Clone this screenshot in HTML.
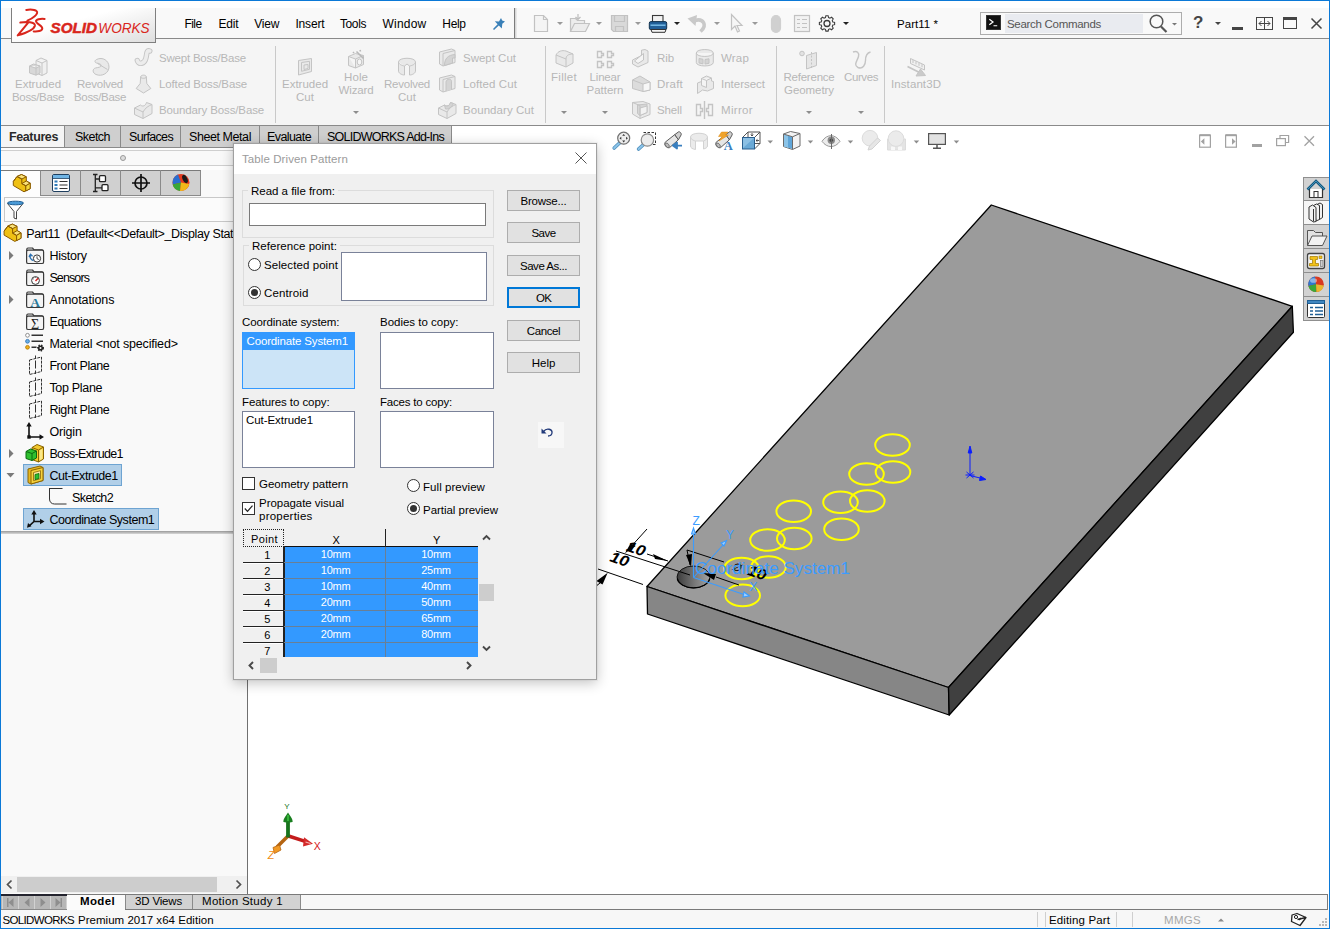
<!DOCTYPE html>
<html lang="en">
<head>
<meta charset="utf-8">
<title>SOLIDWORKS Premium 2017 x64 Edition - Part11</title>
<style>
html,body{margin:0;padding:0}
body{width:1330px;height:929px;position:relative;overflow:hidden;background:#fff;font-family:"Liberation Sans",sans-serif;font-size:11.5px;color:#000;line-height:14px}
*{box-sizing:border-box}
.a{position:absolute}
.t{position:absolute;white-space:nowrap}
svg{position:absolute;overflow:visible}
/* window frame */
#frame{left:0;top:0;width:1330px;height:929px;border:1px solid #0b79d7;z-index:100;pointer-events:none}
/* menubar */
#menubar{left:1px;top:8px;width:1328px;height:30px;background:#f9f9f9}
#menuline{left:1px;top:38px;width:1328px;height:1px;background:#8a8a8a}
#logo{left:11px;top:8px;width:145px;height:35px;border:1px solid #7f7f7f;border-top:none;background:linear-gradient(165deg,#ffffff 40%,#dedede 100%)}
.menu{top:17px;font-size:12.5px}
/* command manager */
#cm{left:1px;top:39px;width:1328px;height:86px;background:#f5f5f5}
.dis{color:#b9b9b9}
.cmt{font-size:12.5px;color:#b7b7b7}
.vsep{width:1px;background:#c9c9c9}
/* tabs */
#tabline{left:1px;top:147px;width:451px;height:1px;background:#8a8a8a}
.tab{top:125px;height:22px;background:#cfcfcf;border:1px solid #8a8a8a;border-bottom:none;font-size:12.5px;padding-top:4px;text-align:center}
.btn{left:507px;width:73px;height:21px;background:#e1e1e1;border:1px solid #adadad}
#logo{z-index:5}

</style>
</head>
<body>
<div id="menubar" class="a"></div>
<div id="menuline" class="a"></div>
<div id="logo" class="a">
<svg width="143" height="34" viewBox="0 0 143 34" style="left:0;top:0">
 <g fill="none" stroke="#d9261c" stroke-width="2" stroke-linecap="round" stroke-linejoin="round">
  <path d="M14.300 1.900 C20 1 26 2 25.100 5 C24.300 8 19 11 15.400 12.600"/>
  <path d="M8.300 14.600 C14 13.600 23.600 13.500 22.900 17.700 C22 22 12 25.500 5.700 27.400 L16 14.900"/>
  <path d="M32.600 10.900 C28 10.400 24 11.500 24 13.100 C24 16 30.500 17.500 30.300 20.600 C30 23 25.500 23.800 21.700 23.400"/>
 </g>
 <text x="38.500" y="24.600" font-family="Liberation Sans,sans-serif" font-size="14.500" font-style="italic" font-weight="bold" fill="#d9261c" stroke="#d9261c" stroke-width=".5" textLength="46.400" lengthAdjust="spacingAndGlyphs">SOLID</text>
 <text x="86.300" y="24.600" font-family="Liberation Sans,sans-serif" font-size="14.500" font-style="italic" fill="#d9261c" textLength="51.400" lengthAdjust="spacingAndGlyphs">WORKS</text>
</svg>
</div>
<div class="t" style="left:184.4px;top:17.0px;letter-spacing:-0.51px;font-size:12px">File</div>
<div class="t" style="left:218.5px;top:17.0px;letter-spacing:-0.22px;font-size:12px">Edit</div>
<div class="t" style="left:254.2px;top:17.0px;letter-spacing:-0.15px;font-size:12px">View</div>
<div class="t" style="left:295.4px;top:17.0px;letter-spacing:-0.17px;font-size:12px">Insert</div>
<div class="t" style="left:340.0px;top:17.0px;letter-spacing:-0.40px;font-size:12px">Tools</div>
<div class="t" style="left:382.5px;top:17.0px;letter-spacing:0.22px;font-size:12px">Window</div>
<div class="t" style="left:442.3px;top:17.0px;letter-spacing:-0.32px;font-size:12px">Help</div>
<!-- pin -->
<svg width="14" height="14" viewBox="0 0 14 14" style="left:492px;top:17px"><path d="M9 1 L10.200 3.600 L13 4.600 L10.300 6.800 L9.800 11.500 L6.800 8.400 L2 13 L1 12 L5.600 7.200 L2.800 4.200 L7 4.400 Z" fill="#3a80b8"/></svg>
<div class="a" style="left:514px;top:8px;width:3px;height:30px;background:linear-gradient(90deg,#7c7c7c 0,#7c7c7c 34%,#d0d0d0 34%,#f0f0f0 100%)"></div>
<!-- quick access toolbar -->
<svg width="340" height="30" viewBox="0 0 340 30" style="left:520px;top:8px">
 <g fill="none" stroke="#c2c2c2" stroke-width="1.2">
  <!-- new -->
  <path d="M14.5 7.5 h9 l4 4 v12 h-13 z M23.5 7.5 v4 h4" fill="#f4f4f4"/>
  <!-- open -->
  <path d="M50.500 23.500 v-13 h5 l2 2 h7 v3 M50.500 23.500 l4-8 h15 l-4 8 z" fill="#ececec"/>
  <path d="M58 6 v5 M55.500 9 l2.500 2.500 l2.500-2.500" stroke="#bdbdbd"/>
  <!-- save -->
  <path d="M91.500 7.500 h16 v16 h-14 l-2-2 z" fill="#d9d9d9"/>
  <path d="M94.500 7.500 v6 h10 v-6 M95.500 23.500 v-5 h8 v5" />
  <!-- undo -->
  <path d="M175 12.500 C183 10 188 17 180.500 23.500" stroke-width="3.600" stroke="#c9c9c9"/>
  <path d="M167.500 10.500 l9.500-3.500 l-1.500 11 z" fill="#c9c9c9" stroke="none"/>
  <!-- select arrow -->
  <path d="M211.500 6.500 v15 l3.500-3.500 l2.500 6 l2-1 l-2.500-5.500 h5 z" fill="#f6f6f6"/>
  <!-- stoplight -->
  <rect x="251.500" y="7.500" width="9" height="17" rx="4.500" fill="#d0d0d0" stroke="#d0d0d0"/>
  <!-- options list -->
  <rect x="274.500" y="7.500" width="15" height="16" fill="#f2f2f2"/>
  <path d="M277 11.500 h3 M282 11.500 h5 M277 15.500 h3 M282 15.500 h5 M277 19.500 h3 M282 19.500 h5"/>
 </g>
 <!-- print -->
 <g>
  <rect x="132.500" y="7.500" width="10.500" height="8" fill="#f2f2f2" stroke="#3a3a3a" stroke-width="1.100"/>
  <rect x="129.300" y="13.600" width="17.400" height="8" rx="1.500" fill="#215f98" stroke="#12324f" stroke-width="1"/>
  <path d="M130.500 17.200 h15" stroke="#7cc0ea" stroke-width="1.400"/>
  <path d="M131 21.500 h15 l-1 2.800 h-13 z" fill="#f4f4f4" stroke="#333" stroke-width="1"/>
 </g>
 <!-- gear -->
 <g fill="none" stroke="#3c3c3c" stroke-width="1.3">
  <circle cx="307" cy="15.500" r="3"/>
  <path d="M305.600 7.700 h2.800 l.5 2.200 l1.700 .8 l2-1.200 l2 2 l-1.200 2 l.7 1.700 l2.200 .5 v2.800 l-2.200 .5 l-.7 1.700 l1.200 2 l-2 2 l-2-1.200 l-1.700 .7 l-.5 2.200 h-2.800 l-.5-2.200 l-1.700-.7 l-2 1.200 l-2-2 l1.200-2 l-.7-1.700 l-2.200-.5 v-2.800 l2.200-.5 l.7-1.700 l-1.200-2 l2-2 l2 1.200 l1.700-.8 z" transform="translate(307 15.500) scale(.82) translate(-307 -17.100)"/>
 </g>
 <!-- dropdown arrows -->
 <g fill="#9a9a9a">
  <path d="M37 14 h6 l-3 3 z"/><path d="M76 14 h6 l-3 3 z"/><path d="M115 14 h6 l-3 3 z"/>
  <path d="M194 14 h6 l-3 3 z"/><path d="M232 14 h6 l-3 3 z"/>
 </g>
 <g fill="#222"><path d="M154 14 h6 l-3 3 z"/><path d="M323 14 h6 l-3 3 z"/></g>
</svg>
<div class="t" style="left:897.0px;top:17.0px;letter-spacing:0.04px;">Part11 *</div>
<!-- search -->
<div class="a" style="left:980px;top:12px;width:202px;height:23px;border:1px solid #adadad;background:#f9f9f9"></div>
<div class="a" style="left:1005px;top:14px;width:138px;height:19px;background:#e9ebf0"></div>
<div class="a" style="left:986px;top:15px;width:15px;height:15px;border:1px solid #333;background:#fff"></div>
<svg width="13" height="13" viewBox="0 0 14 14" style="left:987px;top:16px"><rect x="0" y="0" width="14" height="14" fill="#111"/><path d="M2.500 3.500 l4 3 l-4 3 M7 10.500 h4" stroke="#fff" stroke-width="1.3" fill="none"/></svg>
<div class="t" style="left:1007.0px;top:17.0px;letter-spacing:-0.30px;color:#555">Search Commands</div>
<svg width="34" height="22" viewBox="0 0 34 22" style="left:1146px;top:12px"><circle cx="10.500" cy="9.500" r="6.300" fill="none" stroke="#555" stroke-width="1.5"/><path d="M15 14.500 l5.500 5.500" stroke="#555" stroke-width="2.200"/><path d="M26 11 h5 l-2.500 2.500 z" fill="#777"/></svg>
<div class="t" style="left:1193px;top:12px;font-size:17px;font-weight:bold;line-height:22px;color:#454545">?</div>
<svg width="8" height="6" viewBox="0 0 8 6" style="left:1214px;top:21px"><path d="M1 1 h6 l-3 3 z" fill="#454545"/></svg>
<div class="a" style="left:1232px;top:27px;width:11px;height:3px;background:#454545"></div>
<svg width="18" height="14" viewBox="0 0 18 14" style="left:1256px;top:17px"><rect x="0.500" y="0.500" width="16" height="12" fill="none" stroke="#454545"/><path d="M8.500 0.500 v12 M3 6.500 h11 M5.500 4 l-2.500 2.500 l2.500 2.500 M11.500 4 l2.500 2.500 l-2.500 2.500" stroke="#454545" fill="none"/></svg>
<svg width="16" height="13" viewBox="0 0 16 13" style="left:1283px;top:17px"><rect x="0.500" y="0.500" width="13" height="11" fill="none" stroke="#454545"/><rect x="0.500" y="0.500" width="13" height="2.500" fill="#454545"/></svg>
<svg width="14" height="14" viewBox="0 0 14 14" style="left:1310px;top:17px"><path d="M1.500 1.500 l10 10 M11.500 1.500 l-10 10" stroke="#454545" stroke-width="1.500" fill="none"/></svg>

<div id="cm" class="a"></div>
<div class="a vsep" style="left:275px;top:46px;height:77px"></div>
<div class="a vsep" style="left:545px;top:46px;height:77px"></div>
<div class="a vsep" style="left:776px;top:46px;height:77px"></div>
<div class="a vsep" style="left:884px;top:46px;height:77px"></div>
<div class="t" style="left:15.0px;top:76.7px;letter-spacing:-0.00px;color:#b7b7b7">Extruded</div>
<div class="t" style="left:12.0px;top:89.7px;letter-spacing:-0.33px;color:#b7b7b7">Boss/Base</div>
<div class="t" style="left:77.0px;top:76.7px;letter-spacing:-0.24px;color:#b7b7b7">Revolved</div>
<div class="t" style="left:74.0px;top:89.7px;letter-spacing:-0.33px;color:#b7b7b7">Boss/Base</div>
<div class="t" style="left:159.0px;top:50.7px;letter-spacing:-0.21px;color:#b7b7b7">Swept Boss/Base</div>
<div class="t" style="left:159.0px;top:76.7px;letter-spacing:-0.13px;color:#b7b7b7">Lofted Boss/Base</div>
<div class="t" style="left:159.0px;top:102.7px;letter-spacing:-0.13px;color:#b7b7b7">Boundary Boss/Base</div>
<div class="t" style="left:282.0px;top:76.7px;letter-spacing:-0.00px;color:#b7b7b7">Extruded</div>
<div class="t" style="left:296.0px;top:89.7px;letter-spacing:0.03px;color:#b7b7b7">Cut</div>
<div class="t" style="left:344.0px;top:69.7px;letter-spacing:0.09px;color:#b7b7b7">Hole</div>
<div class="t" style="left:338.5px;top:82.7px;letter-spacing:-0.13px;color:#b7b7b7">Wizard</div>
<div class="t" style="left:384.0px;top:76.7px;letter-spacing:-0.24px;color:#b7b7b7">Revolved</div>
<div class="t" style="left:398.0px;top:89.7px;letter-spacing:0.03px;color:#b7b7b7">Cut</div>
<div class="t" style="left:463.0px;top:50.7px;letter-spacing:-0.01px;color:#b7b7b7">Swept Cut</div>
<div class="t" style="left:463.0px;top:76.7px;letter-spacing:0.09px;color:#b7b7b7">Lofted Cut</div>
<div class="t" style="left:463.0px;top:102.7px;letter-spacing:0.06px;color:#b7b7b7">Boundary Cut</div>
<div class="t" style="left:551.0px;top:69.7px;letter-spacing:0.29px;color:#b7b7b7">Fillet</div>
<div class="t" style="left:589.5px;top:69.7px;letter-spacing:-0.16px;color:#b7b7b7">Linear</div>
<div class="t" style="left:586.5px;top:82.7px;letter-spacing:-0.01px;color:#b7b7b7">Pattern</div>
<div class="t" style="left:657.0px;top:50.7px;letter-spacing:-0.09px;color:#b7b7b7">Rib</div>
<div class="t" style="left:657.0px;top:76.7px;letter-spacing:0.22px;color:#b7b7b7">Draft</div>
<div class="t" style="left:657.0px;top:102.7px;letter-spacing:-0.12px;color:#b7b7b7">Shell</div>
<div class="t" style="left:721.0px;top:50.7px;letter-spacing:0.18px;color:#b7b7b7">Wrap</div>
<div class="t" style="left:721.0px;top:76.7px;letter-spacing:-0.01px;color:#b7b7b7">Intersect</div>
<div class="t" style="left:721.0px;top:102.7px;letter-spacing:0.33px;color:#b7b7b7">Mirror</div>
<div class="t" style="left:783.5px;top:69.7px;letter-spacing:-0.23px;color:#b7b7b7">Reference</div>
<div class="t" style="left:784.0px;top:82.7px;letter-spacing:-0.06px;color:#b7b7b7">Geometry</div>
<div class="t" style="left:844.0px;top:69.7px;letter-spacing:-0.41px;color:#b7b7b7">Curves</div>
<div class="t" style="left:891.0px;top:76.7px;letter-spacing:0.09px;color:#b7b7b7">Instant3D</div>
<svg width="940" height="87" viewBox="0 39 940 87" style="left:0;top:39px">
 <g fill="#8d8d8d">
  <path d="M353 111 h6 l-3 3 z"/><path d="M561 111 h6 l-3 3 z"/><path d="M602 111 h6 l-3 3 z"/><path d="M806 111 h6 l-3 3 z"/><path d="M858 111 h6 l-3 3 z"/>
 </g>
 <g fill="#e9e9e9" stroke="#c4c4c4" stroke-width="1" stroke-linejoin="round">
  <!-- extruded boss -->
  <path d="M36 60.500 l5-2.500 l6 2.500 v12.500 l-5 2.500 l-6-2.500 z M36 60.500 l6 2.500 l5-2.500 M42 63 v12.500" fill="#f0f0f0"/>
  <path d="M29.500 66 l4-2 l6.500 2 v7 l-4 2.200 l-6.500-2.200 z M29.500 66 l6.500 2.200 l4-2.200 M36 68.200 v7" fill="#d8d8d8"/>
  <!-- revolved boss -->
  <path d="M96.500 59.500 c6-3 12.500 1 12.500 7.500 c0 6-7 10-13 7.500 c-3.500-1.500-4-5.500-.5-6.500 c3-.8 5.500-.5 5.500-2.500 c0-2-2.500-2-4.500-2.500 c-2-.5-2-2.500 0-3.500 z"/>
  <path d="M97.500 63.500 l10 6" fill="none"/>
  <!-- swept boss -->
  <path d="M137.300 60.500 c1.500 4.500 7 3.500 8.500-2 c1.500-5 .2-8.500 4-7.500" fill="none" stroke="#c4c4c4" stroke-width="5.400" stroke-linecap="round"/><path d="M137.300 60.500 c1.500 4.500 7 3.500 8.500-2 c1.500-5 .2-8.500 4-7.500" fill="none" stroke="#ececec" stroke-width="3.600" stroke-linecap="round"/>
  <!-- lofted boss -->
  <path d="M140.700 76.800 c0-2.200 5.600-2.200 5.600 0 l.5 6.700 l4 5 l-7.300 4.500 l-7.300-4.500 l4-5 z"/><path d="M140.700 76.800 c0 2 5.600 2 5.600 0" fill="none"/>
  <!-- boundary boss -->
  <path d="M134.500 108 l6-3 c2 2 5 1 6-2.500 l5.500 2 v9 l-9 5 l-8.500-4 z"/><path d="M134.500 108 l8.500 4 c2-4 6-6.500 9-7.500 M143 112 v6.500" fill="none"/>
  <!-- extruded cut -->
  <path d="M298.500 60.500 l13-2 v13 l-13 3.500 z M301.500 62.500 l8-1.200 v8 l-8 2 z M304 65 l4-.5 v4 l-4 1 z"/>
  <!-- hole wizard -->
  <path d="M348.500 56.500 l7-3 l8 2 v9 l-8 3.500 l-7-2.500 z M355.500 68 v-9 l-7-2.500 M355.500 59 l8-3.500"/>
  <ellipse cx="359.500" cy="62" rx="2.300" ry="3" fill="#f5f5f5"/>
  <path d="M356.500 51.500 l7 7 M353 52 l1 1 M360 50 l.5 1.500" fill="none" stroke="#b8b8b8" stroke-width="1.600"/>
  <!-- revolved cut -->
  <path d="M398.500 62 c0-5 17-5 17 0 v9 c0 2-3 4-6 4 v-9 l-2.500-2 l-2.500 2 v9 c-3 0-6-2-6-4 z M398.500 62 c0 2 3 3.500 6 4 M415.500 62 c0 2-3 3.500-6 4"/>
  <!-- swept cut -->
  <path d="M439.500 52 l12-3 l3.500 1.500 v12 l-12 3.500 l-3.500-2 z"/><path d="M443 53.500 l12-3 M443 53.500 v12.500" fill="none"/><path d="M444.500 65.500 c0-7 3.500-10.500 10.500-11 v3.500 h-2.500 v5 z" fill="#d4d4d4"/>
  <!-- lofted cut -->
  <path d="M439.500 78 l12-3 l3.500 1.500 v12 l-12 3.500 l-3.500-2 z"/><path d="M443 79.500 l12-3 M443 79.500 v12.500" fill="none"/><path d="M446 91.200 v-9 c0-3.500 5.500-4 5.500-1 v8.500" fill="#d4d4d4"/>
  <!-- boundary cut -->
  <path d="M438.500 108 l6-3 c2 2 5 1 6-2.500 l5.500 2 v9 l-9 5 l-8.500-4 z"/><path d="M438.500 108 l8.500 4 c2-4 6-6.500 9-7.500 M447 112 v6.500" fill="none"/><path d="M444.500 105 c2 2 5 1 6-2.500 l3 1 c-2 4-5 6-8 5.500 z" fill="#d4d4d4"/>
  <!-- fillet -->
  <path d="M556 55 c2-4 6-5 10-4 l7 3 v9 l-7 4 l-10-4 z M566 67 v-8 c0-3 2-5 7-5 M556 55 l10 4"/>
  <!-- rib -->
  <path d="M632.500 60 L641.500 55.500 V50.200 L645 49.500 L648 51 V62.500 L638 67 L632.500 64 Z"/><path d="M634.500 61 L643.500 53.500 V60 L638 63.500 Z M641.500 55.500 V50.200" fill="#f4f4f4"/>
  <!-- draft -->
  <path d="M632.500 80 L640 76 L650 82 V90 L643 91.500 L632.500 88.500 Z" fill="#dcdcdc"/><path d="M643 84 L650 82 V90 L643 91.500 Z" fill="#f7f7f7"/><path d="M632.500 80 L643 84" fill="none"/>
  <!-- shell -->
  <path d="M632.500 102.500 L643 101.500 L650 104 V114.500 L640 118.500 L632.500 114 Z"/><path d="M637.500 105 L647 104 V112.500 L640 115.500 L637.500 113.500 Z" fill="#d6d6d6"/><path d="M640 108 L647 106 V112.500 L640 115.500 Z" fill="#f2f2f2"/><path d="M632.500 102.500 L640 105.500 V118.500" fill="none"/>
  <!-- wrap -->
  <path d="M696.300 53 c0-4.600 17-4.600 17 0 v9.500 c0 4.600-17 4.600-17 0 z M696.300 53 c0 4.600 17 4.600 17 0"/>
  <path d="M699 58.500 l4 .8 v4.500 l-4-.8 z M705 59.500 l4-.7 v4.500 l-4 .7 z" fill="#d4d4d4"/>
  <!-- intersect -->
  <path d="M697.500 83 l4-1.500 v-3 l5-2.500 l5 2 v3 l2 .5 v7 l-6 2.500 l-5-1 l-5 3.500 z"/><path d="M701.500 78.500 l5 2 l5-2.500 M706.500 80.500 v7 l-5-2 v-7" fill="#f4f4f4"/>
  <!-- instant3d -->
  <path d="M910.500 58.500 l14 6.500 v5 l-14-6.500 z" fill="#f0f0f0"/>
  <path d="M913 60 v3 M916 61.400 v3 M919 62.800 v3 M922 64.200 v3" fill="none"/>
  <path d="M907.500 66.500 l12 6" fill="none" stroke-width="1.600"/>
  <path d="M916 76 l9.500-.5 l-5-6.500 z" fill="#cacaca"/>
 </g>
 <g fill="none" stroke="#c4c4c4" stroke-width="1.400">
  <!-- linear pattern -->
  <path d="M597.500 51.500 h4 v2 h2 v2 h-2 v2 h-4 z M607.500 51.500 h4 v2 h2 v2 h-2 v2 h-4 z M597.500 61.500 h4 v2 h2 v2 h-2 v2 h-4 z M607.500 61.500 h4 v2 h2 v2 h-2 v2 h-4 z"/>
  <!-- mirror -->
  <path d="M704.500 101 v18 M696.500 104.500 h4 v4 h2 v3 h-2 v4 h-4 z M712.500 104.500 h-4 v4 h-2 v3 h2 v4 h4 z"/>
  <!-- ref geometry -->
  <path d="M806.500 55.500 l10-3 v13 l-10 3.500 z" fill="#e6e6e6" stroke-width="1"/>
  <path d="M811.500 52 v17" stroke-dasharray="2 1.500" stroke-width="1"/>
  <circle cx="802" cy="53.500" r="2.300" fill="#e2e2e2" stroke-width="1"/>
  <!-- curves -->
  <path d="M853 52 c4-1.500 6.500 .5 5.500 4.500 c-1 4-5.500 8.500-.5 11 c5 2 7.500-3 7.500-7 c0-4 1-7.500 5-8.500"/>
 </g>
</svg>

<div class="a" style="left:1px;top:125px;width:1328px;height:1px;background:#8a8a8a"></div>
<div class="a" style="left:1px;top:126px;width:1328px;height:22px;background:#fff"></div>
<div id="tabline" class="a"></div>
<div class="a" style="left:1px;top:126px;width:63px;height:21px;background:#f5f5f5"></div>
<div class="a" style="left:1px;top:147px;width:64px;height:1px;background:#8a8a8a"></div>
<div class="a tab" style="left:64px;width:57px"></div>
<div class="a tab" style="left:120px;width:61px"></div>
<div class="a tab" style="left:180px;width:80px"></div>
<div class="a tab" style="left:259px;width:60px"></div>
<div class="a tab" style="left:318px;width:134px"></div>
<div class="t" style="left:9.0px;top:130.0px;letter-spacing:-0.39px;font-weight:bold;color:#2a2a2a;font-size:12.5px">Features</div>
<div class="t" style="left:75.0px;top:130.0px;letter-spacing:-0.54px;font-size:12.5px">Sketch</div>
<div class="t" style="left:129.0px;top:130.0px;letter-spacing:-0.67px;font-size:12.5px">Surfaces</div>
<div class="t" style="left:189.0px;top:130.0px;letter-spacing:-0.43px;font-size:12.5px">Sheet Metal</div>
<div class="t" style="left:267.0px;top:130.0px;letter-spacing:-0.58px;font-size:12.5px">Evaluate</div>
<div class="t" style="left:327.0px;top:130.0px;letter-spacing:-0.76px;font-size:12.5px">SOLIDWORKS Add-Ins</div>

<div class="a" style="left:248px;top:148px;width:1081px;height:746px;background:#fff"></div>
<svg width="1080" height="746" viewBox="249 148 1080 746" style="left:249px;top:148px">
 <defs>
  <linearGradient id="holeg" x1="0" x2="1" y1="0" y2="0"><stop offset="0" stop-color="#3c3c3c"/><stop offset="0.55" stop-color="#7a7a7a"/><stop offset="1" stop-color="#a2a2a2"/></linearGradient>
 </defs>
 <!-- plate -->
 <g stroke="#000" stroke-width="1.300" stroke-linejoin="round">
  <polygon points="991.3,205 1292.3,306.300 948.500,687.500 647,586.500" fill="#9b9b9b"/>
  <polygon points="647,586.500 948.500,687.500 949.200,715 647.500,614" fill="#868686"/>
  <polygon points="1292.300,306.300 1293.400,332.200 949.200,715 948.500,687.500" fill="#404040"/>
 </g>
 <!-- hole -->
 <ellipse cx="693.500" cy="577" rx="16.500" ry="11" fill="url(#holeg)" stroke="#000" stroke-width=".8"/>
 <path d="M677.200 578.500 A16.500 11 0 0 0 709.800 578.500" fill="none" stroke="#000" stroke-width="1.200"/>
 <!-- pattern preview -->
 <g fill="none" stroke="#ffff00" stroke-width="2">
  <ellipse cx="892.500" cy="445" rx="17.300" ry="10.800"/>
  <ellipse cx="893" cy="472" rx="17.300" ry="10.800"/>
  <ellipse cx="866.500" cy="474" rx="17.300" ry="10.800"/>
  <ellipse cx="867.300" cy="501" rx="17.300" ry="10.800"/>
  <ellipse cx="840.500" cy="502.300" rx="17.300" ry="10.800"/>
  <ellipse cx="841.500" cy="529.200" rx="17.300" ry="10.800"/>
  <ellipse cx="793.700" cy="511.300" rx="17.300" ry="10.800"/>
  <ellipse cx="794.300" cy="538.500" rx="17.300" ry="10.800"/>
  <ellipse cx="767.500" cy="540" rx="17.300" ry="10.800"/>
  <ellipse cx="768.500" cy="567" rx="17.300" ry="10.800"/>
  <ellipse cx="741.600" cy="568.500" rx="17.300" ry="10.800"/>
  <ellipse cx="742.700" cy="595.400" rx="17.300" ry="10.800"/>
 </g>
 <!-- dimensions -->
 <g stroke="#000" stroke-width="1" fill="none">
  <path d="M616 551 L690 575"/>
  <path d="M598 569 L643 584.500"/>
  <path d="M647 529 L628 550"/>
  <path d="M647 554 L668 561"/>
  <path d="M687 550 L724 562"/>
  <path d="M687 550 L690 565"/>
  <path d="M716 577 L739 585"/>
  <path d="M600 583 L590 591"/>
 </g>
 <g fill="#000">
  <polygon points="625,553.200 630.500,543.500 635.700,546"/>
  <polygon points="668,561 653,554 655,559"/>
  <polygon points="607.700,572.800 596.500,581 602.500,584.500"/>
  <polygon points="691,567 686,555 692,554"/>
  <polygon points="703,573 716,574 714,580"/>
 </g>
 <g font-family="Liberation Sans,sans-serif" font-style="italic" font-weight="bold" font-size="15" fill="#000">
  <text x="625.500" y="550.500" transform="rotate(19 625.500 550.500)" textLength="19" lengthAdjust="spacingAndGlyphs">10</text>
  <text x="609" y="561" transform="rotate(19 609 561)" textLength="19" lengthAdjust="spacingAndGlyphs">10</text>
  <text x="732" y="569.500" transform="rotate(19 732 569.500)" font-size="11" font-weight="normal">Ø</text>
  <text x="746.500" y="574.500" transform="rotate(19 746.500 574.500)" textLength="19" lengthAdjust="spacingAndGlyphs">10</text>
 </g>
 <!-- coordinate system -->
 <g stroke="#3b9cff" stroke-width="1.100" fill="none">
  <path d="M693.500 577.500 V532 M693.500 577.500 L724 544 M693.500 577.500 L747 595.500"/>
  <path d="M691.500 534 l2-6 l2 6 z M721 543 l5.500-2.500 l-2.500 5.500 z M744 592 l5.500 4 l-6.500 1 z" fill="#9ccfff"/>
 </g>
 <g font-family="Liberation Sans,sans-serif" fill="#3b9cff">
  <text x="692.500" y="525" font-size="12">Z</text>
  <text x="726" y="539" font-size="12">Y</text>
  <text x="749.500" y="591" font-size="12">X</text>
  <text x="695" y="573.500" font-size="16" textLength="155" lengthAdjust="spacingAndGlyphs">Coordinate System1</text>
 </g>
 <!-- origin -->
 <g stroke="#0a1cff" stroke-width="1" fill="#0a1cff">
  <path d="M970 475.500 V452 M970 475.500 L982 478.500" fill="none"/>
  <path d="M968.200 453 l1.800-7 l1.800 7 z M980.500 476 l5.500 3.500 l-6.500 1 z"/>
  <path d="M966.500 472 l7 6 M973.500 472 l-7 6 M965.500 475 h9" fill="none"/>
 </g>
 <!-- triad -->
 <g>
  <path d="M288 836 L277 847" stroke="#b46412" stroke-width="3.600"/>
  <path d="M279.500 845 l1.500 5 l-6.500 3.500 l-1.500-6 z" fill="#f29a26" stroke="#b46412" stroke-width=".8"/>
  <path d="M288.500 836 L306 841.600" stroke="#c41c1c" stroke-width="3.600"/>
  <path d="M304 837.300 l9 6.400 l-10 2.800 z" fill="#d42a2a"/>
  <path d="M305.500 842 l5 1.500" stroke="#f6b0b0" stroke-width="1.200"/>
  <path d="M288 837.500 V818" stroke="#17731c" stroke-width="3.800"/>
  <path d="M283.300 821.500 c0-3 3-6 4.700-9 c1.700 3 4.700 6 4.700 9 c0 1.500-9.400 1.500-9.400 0 z" fill="#1a7f20"/>
  <path d="M288 815 v6" stroke="#3cc040" stroke-width="1.600"/>
  <g font-family="Liberation Sans,sans-serif">
   <text x="284.300" y="808.500" font-size="8" fill="#17731c">Y</text>
   <text x="313.800" y="850" font-size="10.500" fill="#d42020">X</text>
   <text x="267.800" y="859" font-size="11" fill="#f08c14" font-style="italic">Z</text>
  </g>
 </g>
</svg>
<!-- heads-up toolbar -->
<svg width="360" height="26" viewBox="610 127 360 26" style="left:610px;top:127px">
 <!-- zoom to fit -->
 <g>
  <path d="M619.800 142.800 l-5.600 5.200" stroke="#4f8fbe" stroke-width="3.600" stroke-linecap="round"/>
  <path d="M619.800 142.800 l-5.600 5.200" stroke="#8cc4e8" stroke-width="2" stroke-linecap="round"/>
  <circle cx="623.700" cy="138.200" r="6" fill="#ececec" stroke="#707070" stroke-width="1.200"/>
  <path d="M622.200 135.800 h3 l-1.500-1.800 z M622.200 140.600 h3 l-1.500 1.800 z M621.300 136.700 v3 l-1.800-1.500 z M626.100 136.700 v3 l1.800-1.500 z" fill="#333"/>
 </g>
 <!-- zoom area -->
 <g>
  <path d="M643 145 l-4.400 4" stroke="#4f8fbe" stroke-width="3.600" stroke-linecap="round"/>
  <path d="M643 145 l-4.400 4" stroke="#8cc4e8" stroke-width="2" stroke-linecap="round"/>
  <path d="M643.500 132.500 h12 v12 h-4" stroke="#333" stroke-width="1" fill="none" stroke-dasharray="2.500 1.500"/>
  <circle cx="647.400" cy="140" r="6.200" fill="#ececec" stroke="#8a8a8a" stroke-width="1.200"/>
 </g>
 <!-- previous view -->
 <g>
  <path d="M665.200 142.200 l9.600-7.600 l3.600 5.200 l-8.800 7.800 c-3 1-6-3-4.400-5.400 z" fill="#e6e6e6" stroke="#5a5a5a" stroke-width="1"/>
  <path d="M674.800 134.600 l3.800-2.800 c1.400-.4 3 1.600 2.600 3 l-2.800 5 z" fill="#cfcfcf" stroke="#5a5a5a" stroke-width="1"/>
  <ellipse cx="667.300" cy="145.300" rx="1.600" ry="2.600" transform="rotate(-38 667.300 145.300)" fill="#bdbdbd" stroke="#5a5a5a" stroke-width=".7"/>
  <path d="M682 145.600 h-6 M677 142.600 l-4.200 3 l4.200 3 z" stroke="#3a7fbf" stroke-width="1.800" fill="#3a7fbf" stroke-linejoin="round"/>
 </g>
 <!-- section view (disabled) -->
 <g fill="#ebebeb" stroke="#d2d2d2">
  <path d="M690.500 137 c0-5 17-5 17 0 v9 c0 1.500-2 2.500-4 3 v-8 h-8 v8.500 c-3-.5-5-1.500-5-3.500 z"/>
  <path d="M690.500 137 c0 3 5 4 5 4 M707.500 137 c0 2.500-4 4-4 4" fill="none"/>
 </g>
 <!-- dynamic annotation -->
 <g>
  <path d="M716.200 142.200 l9.600-7.600 l3.600 5.200 l-8.800 7.800 c-3 1-6-3-4.400-5.400 z" fill="#e6e6e6" stroke="#5a5a5a" stroke-width="1"/>
  <path d="M725.800 134.600 l3.800-2.800 c1.400-.4 3 1.600 2.600 3 l-2.800 5 z" fill="#cfcfcf" stroke="#5a5a5a" stroke-width="1"/>
  <ellipse cx="718.300" cy="145.300" rx="1.600" ry="2.600" transform="rotate(-38 718.300 145.300)" fill="#bdbdbd" stroke="#5a5a5a" stroke-width=".7"/>
  <path d="M721.500 132 h6.500 l-2.500 3 h3 l-9.500 6 l3-4.500 h-3.500 z" fill="#f0a32a" stroke="#e08a10" stroke-width=".5"/>
  <text x="723.800" y="150" font-family="Liberation Serif,serif" font-size="12.500" font-weight="bold" fill="#3a7fbf">A</text>
 </g>
 <!-- view orientation -->
 <g>
  <path d="M742.500 137.500 l5.500-5.500 h12 v11.500 l-5.500 5.500 M754.500 137.500 l5.500-5.500 M748 132 v5 M760 143.500 h-5" fill="none" stroke="#555" stroke-width="1"/>
  <rect x="742.500" y="137.500" width="12" height="11.500" fill="#6aa9d6" stroke="#2a5f8f"/>
  <path d="M743 138 h11 l-11 10 z" fill="#8cc0e4"/>
  <path d="M752 133 v3 M750.800 134.500 l1.200 1.500 l1.200-1.500 M759 140.500 h-3 M757.500 139.300 l-1.500 1.200 l1.500 1.200" stroke="#333" stroke-width=".8" fill="none"/>
 </g>
 <path d="M767.500 140.500 h5.500 l-2.750 3 z" fill="#8c8c8c"/>
 <!-- display style -->
 <g>
  <path d="M783.500 134 l7-2.500 l9.500 2 v12.500 l-7.500 3.500 l-9-3 z" fill="#f2f2f2" stroke="#6a6a6a" stroke-linejoin="round"/>
  <path d="M784 134.500 l8.500 2.500 v12 l-8.500-2.800 z" fill="#5fa5d8"/>
  <path d="M784 134.500 l4 1.200 v12 l-4-1.300 z" fill="#8cc4e8"/>
  <path d="M783.500 134 l9 2.800 v12.700 M792.500 136.800 l7.500-3.300" stroke="#6a6a6a" fill="none"/>
 </g>
 <path d="M807.700 140.500 h5.500 l-2.750 3 z" fill="#8c8c8c"/>
 <!-- hide/show -->
 <g>
  <path d="M822 141.300 c5-7.500 13-7.500 18 0 c-5 7-13 7-18 0 z" fill="#ececec" stroke="#9a9a9a"/>
  <circle cx="831.300" cy="140.300" r="3.700" fill="#8a8a8a"/>
  <circle cx="831.300" cy="140.300" r="1.800" fill="#4a4a4a"/>
  <path d="M831.500 134 v15" stroke="#6a6a6a" stroke-width="1"/>
 </g>
 <path d="M847.700 140.500 h5.500 l-2.750 3 z" fill="#8c8c8c"/>
 <!-- edit appearance (disabled) -->
 <g>
  <circle cx="870" cy="138.200" r="7.800" fill="#ebebeb" stroke="#dcdcdc"/>
  <path d="M868 150 l1.500-4 l8-8 l3 2.500 l-8.500 8.500 z" fill="#e6e6e6" stroke="#d2d2d2"/>
 </g>
 <!-- scene (disabled) -->
 <g>
  <path d="M887.500 139 h18 v11 h-18 z" fill="#e4e4e4" stroke="#dcdcdc"/>
  <path d="M891 146.500 h4 v3.500 h-4 z M898 146.500 h4 v3.500 h-4 z" fill="#f8f8f8"/>
  <circle cx="896" cy="138.600" r="7.800" fill="#ebebeb" stroke="#dcdcdc"/>
 </g>
 <path d="M913.700 140.500 h5.500 l-2.750 3 z" fill="#8c8c8c"/>
 <!-- view settings -->
 <g>
  <rect x="928.600" y="133.600" width="16.800" height="10.800" fill="#e2e2e2" stroke="#555" stroke-width="1.200"/>
  <path d="M937 145 v3 M933 148.300 h8" stroke="#555" stroke-width="1.500"/>
 </g>
 <path d="M953.700 140.500 h5.500 l-2.750 3 z" fill="#8c8c8c"/>
</svg>
<!-- document window controls -->
<svg width="125" height="18" viewBox="1195 132 125 18" style="left:1195px;top:132px">
 <g fill="none" stroke="#a2a2a2" stroke-width="1.200">
  <rect x="1199.600" y="135.200" width="10.800" height="12"/><path d="M1199.600 135.200 h10.800" stroke-width="2"/><path d="M1204.400 138.300 l-3.600 3.200 l3.600 3.200 z" fill="#a2a2a2" stroke="none"/>
  <rect x="1225.600" y="135.200" width="10.800" height="12"/><path d="M1225.600 135.200 h10.800" stroke-width="2"/><path d="M1232 138.300 l3.600 3.200 l-3.600 3.200 z" fill="#a2a2a2" stroke="none"/>
  <path d="M1252 145.500 h10" stroke-width="3"/>
  <rect x="1276.600" y="138.600" width="8.800" height="7"/><path d="M1280 138.300 v-2.800 h8.600 v7 h-3"/>
  <path d="M1304.500 136.200 l9.500 9.500 M1314 136.200 l-9.500 9.500" stroke-width="1.300"/>
 </g>
</svg>
<!-- task pane tabs -->
<div class="a" style="left:1303px;top:177px;width:26px;height:144px;background:#d2d2d2;border:1px solid #8f8f8f;border-right:none"></div>
<div class="a" style="left:1304px;top:201px;width:25px;height:23px;background:#f6f6f6"></div>
<svg width="26" height="145" viewBox="1303 177 26 145" style="left:1303px;top:177px">
 <g stroke="#8f8f8f"><path d="M1303 200.500 h26 M1303 224.500 h26 M1303 248.500 h26 M1303 272.500 h26 M1303 296.500 h26"/></g>
 <!-- home -->
 <path d="M1309.500 189 v8.500 h13 v-8.500" fill="#fff" stroke="#333" stroke-width="1.200"/>
 <path d="M1307.500 189.500 l8.500-8.500 l8.500 8.500" fill="none" stroke="#155a80" stroke-width="2.600"/>
 <path d="M1307.500 189.500 l8.500-8.500 l8.500 8.500" fill="none" stroke="#3f8fb8" stroke-width="1"/>
 <rect x="1314" y="191.500" width="4" height="6" fill="#fff" stroke="#333"/>
 <!-- design library -->
 <g fill="#f2f2f2" stroke="#333" stroke-width="1" stroke-linejoin="round">
  <path d="M1317 204.500 l3-1.500 l2.500 1.500 v13 l-3 2 z"/>
  <path d="M1313.500 205.500 l3-1.500 l3 1.500 v14 l-3.500 1.500 z"/>
  <path d="M1309 207 l3.500-2 l3.500 2.500 v14 l-2.500 .5 l-4.500-3 z"/>
  <path d="M1313.500 209 v12.500" fill="none"/>
 </g>
 <!-- file explorer -->
 <path d="M1307.500 245.500 v-15 h6 l2 2 h7 v3.500" fill="#e2e2e2" stroke="#555"/>
 <path d="M1307.500 245.500 l4.500-9.500 h15 l-4.500 9.500 z" fill="#f2f2f2" stroke="#555"/>
 <!-- view palette -->
 <rect x="1307.500" y="253.500" width="17" height="15" rx="2" fill="#f4f4f4" stroke="#444" stroke-width="1.300"/>
 <path d="M1310 256.500 h7.500 v3 h-2 v4 h3 v2.500 h-9 v-2.500 h3 v-4 h-2.500 z" fill="#f2c21a" stroke="#a07800" stroke-width=".7"/>
 <rect x="1319" y="256" width="3" height="2.500" fill="#f2c21a" stroke="#a07800" stroke-width=".6"/>
 <rect x="1320.500" y="260.500" width="2.500" height="6" fill="#cfcfcf" stroke="#666" stroke-width=".6"/>
 <!-- appearances -->
 <circle cx="1316" cy="284.300" r="7.800" fill="#d83a22"/>
 <path d="M1316 284.300 L1315 276.600 A7.800 7.800 0 0 0 1308.400 286 z" fill="#2f78d0"/>
 <path d="M1316 284.300 L1308.400 286 A7.800 7.800 0 0 0 1316.500 292.100 z" fill="#3aa83a"/>
 <path d="M1316 284.300 L1316.500 292.100 A7.800 7.800 0 0 0 1323.700 285.500 z" fill="#eab830"/>
 <ellipse cx="1313.500" cy="280.500" rx="3.500" ry="2.300" fill="#fff" opacity=".45"/>
 <!-- custom props -->
 <rect x="1307.500" y="300.500" width="17" height="17" rx="1" fill="#fff" stroke="#333"/>
 <rect x="1307.500" y="300.500" width="17" height="3" fill="#3f86c0" stroke="#1f5f95"/>
 <path d="M1310 307.500 h3 M1315 307.500 h8 M1310 311 h3 M1315 311 h8 M1310 314.500 h3 M1315 314.500 h8" stroke="#1f5f95" stroke-width="1.400"/>
</svg>

<div class="a" style="left:1px;top:148px;width:246px;height:746px;background:#f9f9f9"></div>
<div class="a" style="left:247px;top:148px;width:1px;height:746px;background:#707070"></div>
<div class="a" style="left:1px;top:148px;width:246px;height:22px;background:#fdfdfd"></div>
<div class="a" style="left:1px;top:150px;width:246px;height:16px;background:#f9f9f9;border-top:1px solid #cfcfcf;border-bottom:1px solid #cfcfcf"></div>
<div class="a" style="left:120px;top:155px;width:6px;height:6px;border-radius:3px;border:1px solid #9a9a9a;background:#ddd"></div>
<!-- manager tabs -->
<div class="a" style="left:1px;top:170px;width:40px;height:27px;background:#fdfdfd;border-top:1px solid #7a7a7a"></div>
<div class="a" style="left:40px;top:170px;width:161px;height:26px;background:#d0d0d0;border:1px solid #8a8a8a;border-top-color:#7a7a7a"></div>
<div class="a" style="left:80px;top:170px;width:1px;height:26px;background:#8a8a8a"></div>
<div class="a" style="left:120px;top:170px;width:1px;height:26px;background:#8a8a8a"></div>
<div class="a" style="left:160px;top:170px;width:1px;height:26px;background:#8a8a8a"></div>
<svg width="200" height="26" viewBox="0 170 200 26" style="left:0;top:170px">
 <!-- feature manager -->
 <g stroke="#8a5a00" stroke-width="1" stroke-linejoin="round">
  <path d="M13.300 181.500 L17 176.500 L21.500 174.500 L26.300 176.800 L26.300 181 L30.200 183.200 L30.200 188.700 L24 191.800 L13.300 185.500 Z" fill="#efc014"/>
  <path d="M17 176.500 L21.500 174.500 L26.300 176.800 L21.800 179 Z" fill="#f9e27a"/>
  <path d="M21.800 183.600 L26.300 181 L30.200 183.200 L25.800 185.800 Z" fill="#f9e27a"/>
  <path d="M21.800 179 V183.600 L25.800 185.800 V191 M13.300 181.500 L17 176.500 L21.800 179" fill="none"/>
  <path d="M25.800 185.800 L30.200 183.200 V188.700 L25.800 191 Z" fill="#f4d63a"/>
 </g>
 <!-- property manager -->
 <rect x="52.500" y="174.500" width="17" height="17" rx="1.500" fill="#fff" stroke="#1f3f5f"/>
 <path d="M53 175 h16 v3.500 h-16 z" fill="#6fb4e4"/>
 <path d="M52.500 178.500 h17" stroke="#1f3f5f" stroke-width=".8"/>
 <path d="M54.500 181.500 h3 M54.500 185 h3 M54.500 188.500 h3" stroke="#2f7ab8" stroke-width="2"/>
 <path d="M59.500 181.500 h8 M59.500 185 h8 M59.500 188.500 h8" stroke="#333" stroke-width="1.100"/>
 <!-- config manager -->
 <g fill="#fff" stroke="#222" stroke-width="1.300">
  <path d="M95.300 174.500 v17 M93 174.500 h4.500 M93 191.500 h4.500 M95.300 179 h5 M95.300 187.800 h7" fill="none"/>
  <rect x="99.500" y="175.700" width="6" height="6" rx="1"/><rect x="102" y="184.700" width="6" height="6" rx="1"/>
 </g>
 <!-- dimxpert -->
 <g fill="none" stroke="#111" stroke-width="1.700">
  <circle cx="141" cy="183" r="6"/><path d="M141 174 v18 M132 183 h18"/>
 </g>
 <!-- display manager -->
 <circle cx="181" cy="182.500" r="8.500" fill="#e43a20"/>
 <path d="M181 182.500 L178 174.600 A8.500 8.500 0 0 0 172.700 184.500 z" fill="#2a6fd0"/>
 <path d="M181 182.500 L172.700 184.500 A8.500 8.500 0 0 0 180 190.900 z" fill="#38a838"/>
 <path d="M181 182.500 L180 190.900 A8.500 8.500 0 0 0 189.300 184 z" fill="#f0b818"/>
 <ellipse cx="185" cy="179" rx="2.300" ry="4.500" transform="rotate(-25 185 179)" fill="#1a1a1a"/>
</svg>
<!-- filter -->
<div class="a" style="left:4px;top:197px;width:243px;height:25px;border:1px solid #c8c8c8;border-right:none;background:#fbfbfb"></div>
<svg width="20" height="20" viewBox="0 0 20 20" style="left:6px;top:200px">
 <path d="M1.500 3.500 l6.500 8 v6.500 l2.500 1 v-7.500 l6.500-8 z" fill="#fff" stroke="#444" stroke-width="1"/>
 <ellipse cx="9.500" cy="3" rx="8" ry="1.800" fill="#4a9bd8" stroke="#1f5f95"/>
</svg>
<!-- selection highlights -->
<div class="a" style="left:23px;top:464px;width:99px;height:22px;background:#b1cfe8;border:1px solid #6ea4d2"></div>
<div class="a" style="left:23px;top:508px;width:136px;height:22px;background:#b1cfe8;border:1px solid #6ea4d2"></div>
<!-- tree labels -->
<div class="a" style="left:0;top:222px;width:234px;height:22px;overflow:hidden"><div class="t" style="left:26.2px;top:5.2px;letter-spacing:-0.38px;font-size:12.5px">Part11&nbsp; (Default&lt;&lt;Default&gt;_Display State 1</div></div>
<div class="t" style="left:49.4px;top:248.5px;letter-spacing:-0.20px;font-size:12.5px">History</div>
<div class="t" style="left:49.4px;top:270.5px;letter-spacing:-0.88px;font-size:12.5px">Sensors</div>
<div class="t" style="left:49.4px;top:292.5px;letter-spacing:-0.10px;font-size:12.5px">Annotations</div>
<div class="t" style="left:49.4px;top:314.5px;letter-spacing:-0.43px;font-size:12.5px">Equations</div>
<div class="t" style="left:49.4px;top:336.5px;letter-spacing:-0.18px;font-size:12.5px">Material &lt;not specified&gt;</div>
<div class="t" style="left:49.4px;top:358.5px;letter-spacing:-0.42px;font-size:12.5px">Front Plane</div>
<div class="t" style="left:49.4px;top:380.5px;letter-spacing:-0.31px;font-size:12.5px">Top Plane</div>
<div class="t" style="left:49.4px;top:402.5px;letter-spacing:-0.42px;font-size:12.5px">Right Plane</div>
<div class="t" style="left:49.4px;top:424.5px;letter-spacing:-0.17px;font-size:12.5px">Origin</div>
<div class="t" style="left:49.4px;top:446.5px;letter-spacing:-0.66px;font-size:12.5px">Boss-Extrude1</div>
<div class="t" style="left:49.4px;top:468.5px;letter-spacing:-0.45px;font-size:12.5px">Cut-Extrude1</div>
<div class="t" style="left:72.1px;top:490.5px;letter-spacing:-0.60px;font-size:12.5px">Sketch2</div>
<div class="t" style="left:49.4px;top:512.5px;letter-spacing:-0.46px;font-size:12.5px">Coordinate System1</div>
<!-- tree icons -->
<svg width="50" height="320" viewBox="0 222 50 320" style="left:0;top:222px">
 <!-- expanders -->
 <g fill="#7a7a7a"><path d="M9 251 l4.500 4.500 l-4.500 4.500 z"/><path d="M9 295 l4.500 4.500 l-4.500 4.500 z"/><path d="M9 449 l4.500 4.500 l-4.500 4.500 z"/><path d="M6.500 473 h8 l-4 4.500 z"/></g>
 <!-- part icon -->
 <g stroke="#8a5a00" stroke-width="1" stroke-linejoin="round" transform="translate(-9.200 49.600)">
  <path d="M13.300 181.500 L17 176.500 L21.500 174.500 L26.300 176.800 L26.300 181 L30.200 183.200 L30.200 188.700 L24 191.800 L13.300 185.500 Z" fill="#efc014"/>
  <path d="M17 176.500 L21.500 174.500 L26.300 176.800 L21.800 179 Z" fill="#f9e27a"/>
  <path d="M21.800 183.600 L26.300 181 L30.200 183.200 L25.800 185.800 Z" fill="#f9e27a"/>
  <path d="M21.800 179 V183.600 L25.800 185.800 V191 M13.300 181.500 L17 176.500 L21.800 179" fill="none"/>
  <path d="M25.800 185.800 L30.200 183.200 V188.700 L25.800 191 Z" fill="#f4d63a"/>
 </g>
 <!-- folders: history sensors annotations equations -->
 <g stroke="#3a3a3a" stroke-width="1.200" stroke-linejoin="round">
  <path d="M26.800 252.5 v-3.300 c0-.8 .5-1.200 1.200-1.200 h4.500 l1.500 1.800 h8 c.8 0 1.200 .5 1.200 1.200 v2" fill="#e8e8e8"/><rect x="26.600" y="250.2" width="17" height="13.300" rx="1.600" fill="#f4f4f4"/>
  <path d="M26.800 274.5 v-3.300 c0-.8 .5-1.200 1.200-1.200 h4.500 l1.500 1.800 h8 c.8 0 1.200 .5 1.200 1.200 v2" fill="#e8e8e8"/><rect x="26.600" y="272.2" width="17" height="13.300" rx="1.600" fill="#f4f4f4"/>
  <path d="M26.800 296.5 v-3.300 c0-.8 .5-1.200 1.200-1.200 h4.500 l1.500 1.800 h8 c.8 0 1.200 .5 1.200 1.200 v2" fill="#e8e8e8"/><rect x="26.600" y="294.2" width="17" height="13.300" rx="1.600" fill="#f4f4f4"/>
  <path d="M26.800 318.5 v-3.300 c0-.8 .5-1.200 1.200-1.200 h4.500 l1.500 1.800 h8 c.8 0 1.200 .5 1.200 1.200 v2" fill="#e8e8e8"/><rect x="26.600" y="316.2" width="17" height="13.300" rx="1.600" fill="#f4f4f4"/>
 </g>
 <circle cx="37" cy="258.500" r="3.600" fill="#fff" stroke="#333" stroke-width="1"/><path d="M37 256.300 v2.400 l1.800 .8" fill="none" stroke="#333" stroke-width=".9"/><path d="M30.500 255 c-1 2 0 5 3 5.500 M29 256.800 l1.500-2.500 l2 2" fill="none" stroke="#2a6fb0" stroke-width="1.400"/>
 <circle cx="35.500" cy="280.500" r="3.900" fill="#fff" stroke="#333" stroke-width="1"/><path d="M35.500 281 l2.600-2.800" stroke="#d02020" stroke-width="1.400"/><path d="M33 278.500 l1 .8 M35.500 277 v1" stroke="#555" stroke-width=".7"/>
 <text x="30.300" y="307" font-family="Liberation Serif,serif" font-weight="bold" font-size="13.500" fill="#2a7a9a">A</text>
 <text x="31" y="329" font-family="Liberation Serif,serif" font-size="14" fill="#222">Σ</text>
 <!-- material -->
 <g stroke="#333" stroke-width="1.500"><path d="M31.500 335.300 h11.500 M31.500 341.300 h11.500 M31.500 347.300 h5"/></g>
 <circle cx="27.500" cy="335.300" r="1.900" fill="#fff" stroke="#777" stroke-width=".8"/><circle cx="27.500" cy="341.300" r="1.900" fill="#6ab0e8" stroke="#2a6fb0" stroke-width=".8"/><circle cx="27.500" cy="347.300" r="1.900" fill="#f0b020" stroke="#b07800" stroke-width=".8"/>
 <circle cx="40.500" cy="348" r="2.600" fill="#222" stroke="#222" stroke-width="1.800" stroke-dasharray="1.300 1.200"/><circle cx="40.500" cy="348" r="1" fill="#f9f9f9"/>
 <!-- planes -->
 <g fill="none" stroke="#333" stroke-width="1">
  <path d="M29.500 360 l12-3 v14.500 l-12 3 z" stroke-dasharray="3 1"/><path d="M35.500 355.500 v3 M35.500 360.500 v8 M35.500 370.500 v3.500"/>
  <path d="M29.500 382 l12-3 v14.500 l-12 3 z" stroke-dasharray="3 1"/><path d="M35.500 377.500 v3 M35.500 382.500 v8 M35.500 392.500 v3.500"/>
  <path d="M29.500 404 l12-3 v14.500 l-12 3 z" stroke-dasharray="3 1"/><path d="M35.500 399.500 v3 M35.500 404.500 v8 M35.500 414.500 v3.500"/>
 </g>
 <!-- origin -->
 <g stroke="#111" stroke-width="1.600" fill="#111"><path d="M29 425 v12 h11" fill="none"/><path d="M26.300 426.500 l2.700-4.500 l2.700 4.500 z M39.500 434.300 l4.500 2.700 l-4.500 2.700 z" stroke="none"/><rect x="27.300" y="435.300" width="3.400" height="3.400" stroke="none"/></g>
 <!-- boss extrude -->
 <g stroke-linejoin="round">
  <path d="M32 447.500 l5-3 l6.500 2.500 v12 l-5 3 l-6.500-2.500 z" fill="#f3c92c" stroke="#8a6400"/>
  <path d="M38.500 450 v12 M32 447.500 l6.500 2.500 l5-3" stroke="#8a6400" fill="none"/>
  <path d="M39.500 450.500 l3-1.800 v10 l-3 1.800 z" fill="#fbe88a" stroke="none"/>
  <path d="M26 451.500 l4.500-2.500 l6 2 v7 l-4.500 2.500 l-6-2 z" fill="#2fc02f" stroke="#0a6a10"/>
  <path d="M26 451.500 l6 2 l4.500-2.500 M32 453.500 v7" stroke="#0a6a10" fill="none"/>
 </g>
 <!-- cut extrude -->
 <g stroke-linejoin="round">
  <path d="M28 469 l12-3 l3 1.500 v13 l-12 3.500 l-3-1.500 z" fill="#e8b820" stroke="#8a6400"/>
  <path d="M31 470.500 l12-3 v13 l-12 3.500 z" fill="#f6d23c" stroke="#8a6400"/>
  <path d="M33.500 472.500 l7-1.800 v8 l-7 2 z" fill="#fbe9a0" stroke="#8a6400" stroke-width=".8"/>
  <path d="M35 474.500 l4-1 v5 l-4 1.200 z" fill="#2fc02f" stroke="#0a6a10" stroke-width=".8"/>
 </g>
 <!-- coordinate system -->
 <g stroke="#111" stroke-width="1.600" fill="#111"><path d="M34 513 v8.500 h7 M34 521.500 l-4.500 4.200" fill="none"/><path d="M31.300 514.500 l2.700-4.500 l2.700 4.500 z M40 518.800 l4.500 2.700 l-4.500 2.700 z M27 527.800 l1-4.800 l3.500 3.300 z" stroke="none"/></g>
</svg>
<svg width="20" height="20" viewBox="0 0 20 20" style="left:49px;top:487px"><path d="M0.500 1 v11 c0 3 2 5 5 5 h12 M0.500 1.500 h13" fill="none" stroke="#333" stroke-width="1"/></svg>
<!-- splitter -->
<div class="a" style="left:1px;top:531px;width:246px;height:3px;background:linear-gradient(#9a9a9a,#d8d8d8)"></div>
<!-- h scrollbar -->
<div class="a" style="left:1px;top:876px;width:246px;height:17px;background:#f0f0f0"></div>
<div class="a" style="left:17px;top:877px;width:200px;height:15px;background:#cdcdcd"></div>
<svg width="246" height="17" viewBox="0 0 246 17" style="left:1px;top:876px"><path d="M10.500 4.500 l-4 4 l4 4 M235.500 4.500 l4 4 l-4 4" fill="none" stroke="#505050" stroke-width="1.700"/></svg>

<div id="dlg" class="a" style="left:233px;top:143px;width:364px;height:537px;background:#f0f0f0;border:1px solid #a0a0a0;box-shadow:0 0 0 1px rgba(0,0,0,.03),0 3px 12px rgba(0,0,0,.24)"></div>
<div class="a" style="left:234px;top:144px;width:362px;height:30px;background:#fff"></div>
<div class="t" style="left:242.0px;top:151.5px;letter-spacing:0.09px;color:#9b9b9b">Table Driven Pattern</div>
<svg width="14" height="14" viewBox="0 0 14 14" style="left:574px;top:151px"><path d="M1.500 1.500 l11 11 M12.500 1.500 l-11 11" stroke="#555" stroke-width="1" fill="none"/></svg>
<!-- group: read a file from -->
<div class="a" style="left:242px;top:190px;width:252px;height:48px;border:1px solid #dcdcdc"></div>
<div class="a" style="left:248px;top:183px;width:90px;height:14px;background:#f0f0f0"></div>
<div class="t" style="left:251.0px;top:183.5px;letter-spacing:-0.02px;">Read a file from:</div>
<div class="a" style="left:249px;top:203px;width:237px;height:23px;background:#fff;border:1px solid #7a7a7a"></div>
<!-- group: reference point -->
<div class="a" style="left:243px;top:245px;width:251px;height:61px;border:1px solid #dcdcdc"></div>
<div class="a" style="left:249px;top:238px;width:91px;height:14px;background:#f0f0f0"></div>
<div class="t" style="left:252.0px;top:238.5px;letter-spacing:0.04px;">Reference point:</div>
<div class="a" style="left:247.500px;top:258px;width:13px;height:13px;border-radius:50%;border:1px solid #333;background:#fff"></div>
<div class="t" style="left:264.0px;top:258.0px;letter-spacing:0.08px;">Selected point</div>
<div class="a" style="left:247.500px;top:286px;width:13px;height:13px;border-radius:50%;border:1px solid #333;background:#fff"></div>
<div class="a" style="left:250.500px;top:289px;width:7px;height:7px;border-radius:50%;background:#333"></div>
<div class="t" style="left:264.0px;top:286.0px;letter-spacing:0.13px;">Centroid</div>
<div class="a" style="left:341px;top:252px;width:146px;height:49px;background:#fff;border:1px solid #7a8299"></div>
<!-- coordinate system -->
<div class="t" style="left:242.0px;top:315.0px;letter-spacing:-0.09px;">Coordinate system:</div>
<div class="a" style="left:242px;top:332px;width:113px;height:57px;background:#cce4f7;border:1px solid #3399ff"></div>
<div class="a" style="left:243px;top:333px;width:111px;height:17px;background:#3399ff"></div>
<div class="t" style="left:246.5px;top:334.0px;letter-spacing:-0.15px;color:#fff">Coordinate System1</div>
<div class="t" style="left:380.0px;top:315.0px;letter-spacing:-0.01px;">Bodies to copy:</div>
<div class="a" style="left:380px;top:332px;width:114px;height:57px;background:#fff;border:1px solid #7a8299"></div>
<div class="t" style="left:242.0px;top:395.0px;letter-spacing:-0.08px;">Features to copy:</div>
<div class="a" style="left:242px;top:411px;width:113px;height:57px;background:#fff;border:1px solid #7a8299"></div>
<div class="t" style="left:246.0px;top:413.0px;letter-spacing:-0.06px;">Cut-Extrude1</div>
<div class="t" style="left:380.0px;top:395.0px;letter-spacing:-0.20px;">Faces to copy:</div>
<div class="a" style="left:380px;top:411px;width:114px;height:57px;background:#fff;border:1px solid #7a8299"></div>
<!-- undo small button -->
<div class="a" style="left:538px;top:422px;width:26px;height:26px;background:#f7f7f7"></div>
<svg width="14" height="12" viewBox="0 0 14 12" style="left:540px;top:426px"><path d="M3.500 5.500 c3-4 9-2.500 8.500 1.500 c-.3 2-2 3-4 3" fill="none" stroke="#223a7a" stroke-width="1.300"/><path d="M1.500 2.500 v5 h5 z" fill="#223a7a"/></svg>
<!-- checkboxes -->
<div class="a" style="left:242px;top:477px;width:13px;height:13px;background:#fff;border:1px solid #333"></div>
<div class="t" style="left:259.0px;top:477.0px;letter-spacing:-0.03px;">Geometry pattern</div>
<div class="a" style="left:242px;top:502px;width:13px;height:13px;background:#fff;border:1px solid #333"></div>
<svg width="13" height="13" viewBox="0 0 13 13" style="left:242px;top:502px"><path d="M2.800 6.500 l2.700 2.800 l5-5.600" fill="none" stroke="#222" stroke-width="1.200"/></svg>
<div class="t" style="left:259.0px;top:495.5px;letter-spacing:-0.04px;">Propagate visual</div>
<div class="t" style="left:259.0px;top:508.5px;letter-spacing:0.24px;">properties</div>
<!-- radios -->
<div class="a" style="left:406.500px;top:479px;width:13px;height:13px;border-radius:50%;border:1px solid #333;background:#fff"></div>
<div class="t" style="left:423.0px;top:479.5px;letter-spacing:0.05px;">Full preview</div>
<div class="a" style="left:406.500px;top:502px;width:13px;height:13px;border-radius:50%;border:1px solid #333;background:#fff"></div>
<div class="a" style="left:409.500px;top:505px;width:7px;height:7px;border-radius:50%;background:#333"></div>
<div class="t" style="left:423.0px;top:502.5px;letter-spacing:-0.03px;">Partial preview</div>
<!-- table -->
<div class="a" style="left:243px;top:529px;width:251px;height:145px;background:#f0f0f0"></div>
<div class="a" style="left:243px;top:529px;width:235px;height:128px;overflow:hidden;background:#f0f0f0">
 <div class="a" style="left:41px;top:17px;width:194px;height:112px;background:#3399ff"></div>
 <div class="a" style="left:0;top:0;width:41px;height:18px;border:1px dotted #222"></div>
 <div class="a" style="left:41px;top:17px;width:194px;height:1px;background:#111"></div>
 <div class="a" style="left:40px;top:17px;width:1.500px;height:112px;background:#222"></div>
 <div class="a" style="left:141.500px;top:0;width:1.500px;height:18px;background:#222"></div>
 <div class="a" style="left:142px;top:18px;width:1px;height:112px;background:#6a7f95"></div>
 <div class="a" style="left:0;top:33px;width:41px;height:1px;background:#222"></div><div class="a" style="left:0;top:34px;width:40px;height:1px;background:#fff"></div><div class="a" style="left:41px;top:33px;width:194px;height:1px;background:#6a7f95"></div>
 <div class="a" style="left:0;top:49px;width:41px;height:1px;background:#222"></div><div class="a" style="left:0;top:50px;width:40px;height:1px;background:#fff"></div><div class="a" style="left:41px;top:49px;width:194px;height:1px;background:#6a7f95"></div>
 <div class="a" style="left:0;top:65px;width:41px;height:1px;background:#222"></div><div class="a" style="left:0;top:66px;width:40px;height:1px;background:#fff"></div><div class="a" style="left:41px;top:65px;width:194px;height:1px;background:#6a7f95"></div>
 <div class="a" style="left:0;top:81px;width:41px;height:1px;background:#222"></div><div class="a" style="left:0;top:82px;width:40px;height:1px;background:#fff"></div><div class="a" style="left:41px;top:81px;width:194px;height:1px;background:#6a7f95"></div>
 <div class="a" style="left:0;top:97px;width:41px;height:1px;background:#222"></div><div class="a" style="left:0;top:98px;width:40px;height:1px;background:#fff"></div><div class="a" style="left:41px;top:97px;width:194px;height:1px;background:#6a7f95"></div>
 <div class="a" style="left:0;top:113px;width:41px;height:1px;background:#222"></div><div class="a" style="left:0;top:114px;width:40px;height:1px;background:#fff"></div><div class="a" style="left:41px;top:113px;width:194px;height:1px;background:#6a7f95"></div>
 <div class="t" style="left:8.0px;top:3.0px;letter-spacing:0.38px;font-size:11px">Point</div>
 <div class="t" style="left:89.5px;top:4.0px;letter-spacing:-1.34px;font-size:11px">X</div>
 <div class="t" style="left:190.0px;top:4.0px;letter-spacing:-1.34px;font-size:11px">Y</div>
 <div class="t" style="left:21.2px;top:18.5px;letter-spacing:-0.62px;font-size:11px">1</div>
 <div class="t" style="left:21.2px;top:34.5px;letter-spacing:-0.62px;font-size:11px">2</div>
 <div class="t" style="left:21.2px;top:50.5px;letter-spacing:-0.62px;font-size:11px">3</div>
 <div class="t" style="left:21.2px;top:66.5px;letter-spacing:-0.62px;font-size:11px">4</div>
 <div class="t" style="left:21.2px;top:82.5px;letter-spacing:-0.62px;font-size:11px">5</div>
 <div class="t" style="left:21.2px;top:98.5px;letter-spacing:-0.62px;font-size:11px">6</div>
 <div class="t" style="left:21.2px;top:114.5px;letter-spacing:-0.62px;font-size:11px">7</div>
 <div class="t" style="left:77.8px;top:18.0px;letter-spacing:-0.27px;font-size:11px;color:#fff">10mm</div>
 <div class="t" style="left:77.8px;top:34.0px;letter-spacing:-0.27px;font-size:11px;color:#fff">10mm</div>
 <div class="t" style="left:77.8px;top:50.0px;letter-spacing:-0.27px;font-size:11px;color:#fff">10mm</div>
 <div class="t" style="left:77.8px;top:66.0px;letter-spacing:-0.27px;font-size:11px;color:#fff">20mm</div>
 <div class="t" style="left:77.8px;top:82.0px;letter-spacing:-0.27px;font-size:11px;color:#fff">20mm</div>
 <div class="t" style="left:77.8px;top:98.0px;letter-spacing:-0.27px;font-size:11px;color:#fff">20mm</div>
 <div class="t" style="left:178.2px;top:18.0px;letter-spacing:-0.27px;font-size:11px;color:#fff">10mm</div>
 <div class="t" style="left:178.2px;top:34.0px;letter-spacing:-0.27px;font-size:11px;color:#fff">25mm</div>
 <div class="t" style="left:178.2px;top:50.0px;letter-spacing:-0.27px;font-size:11px;color:#fff">40mm</div>
 <div class="t" style="left:178.2px;top:66.0px;letter-spacing:-0.27px;font-size:11px;color:#fff">50mm</div>
 <div class="t" style="left:178.2px;top:82.0px;letter-spacing:-0.27px;font-size:11px;color:#fff">65mm</div>
 <div class="t" style="left:178.2px;top:98.0px;letter-spacing:-0.27px;font-size:11px;color:#fff">80mm</div>
</div>
<!-- scrollbars -->
<div class="a" style="left:479px;top:584px;width:15px;height:17px;background:#cdcdcd"></div>
<div class="a" style="left:260px;top:658px;width:17px;height:15px;background:#cdcdcd"></div>
<svg width="260" height="150" viewBox="240 528 260 150" style="left:240px;top:528px"><g fill="none" stroke="#484848" stroke-width="1.900"><path d="M483 539.500 l3.500-3.500 l3.500 3.500 M483 646.500 l3.500 3.500 l3.500-3.500 M253 662 l-3.500 3.500 l3.500 3.500 M467 662 l3.500 3.500 l-3.500 3.500"/></g></svg>
<!-- buttons -->
<div class="a btn" style="top:190px"></div><div class="t" style="left:520.5px;top:194.0px;letter-spacing:-0.22px;">Browse...</div>
<div class="a btn" style="top:222px"></div><div class="t" style="left:531.5px;top:226.0px;letter-spacing:-0.55px;">Save</div>
<div class="a btn" style="top:255px"></div><div class="t" style="left:520.0px;top:259.0px;letter-spacing:-0.48px;">Save As...</div>
<div class="a btn" style="top:287px;border:2px solid #0078d7"></div><div class="t" style="left:536.0px;top:291.0px;letter-spacing:-0.81px;">OK</div>
<div class="a btn" style="top:320px"></div><div class="t" style="left:526.8px;top:324.0px;letter-spacing:-0.39px;">Cancel</div>
<div class="a btn" style="top:352px"></div><div class="t" style="left:531.8px;top:356.0px;letter-spacing:-0.04px;">Help</div>

<div class="a" style="left:1px;top:894px;width:1327px;height:16px;background:#f7f7f7;border-top:1px solid #7a7a7a;border-bottom:1px solid #7a7a7a;border-right:1px solid #7a7a7a"></div>
<div class="a" style="left:1px;top:910px;width:1328px;height:18px;background:#f7f7f7"></div>
<!-- nav buttons -->
<div class="a" style="left:1px;top:894px;width:67px;height:16px;background:#b6b6b6;border-top:2px solid #23232e;border-bottom:1px solid #8a8a8a"></div>
<svg width="68" height="16" viewBox="0 894 68 16" style="left:0;top:894px"><g stroke="#d2d2d2"><path d="M2.500 896 v13 M18.500 896 v13 M34.500 896 v13 M50.500 896 v13 M66.500 896 v13"/></g><g fill="#8e8e8e" stroke="none"><path d="M13.500 898 l-5 4.500 l5 4.500 z M7 898 h1.500 v9 h-1.500 z M29.500 898 l-5 4.500 l5 4.500 z M40.500 898 l5 4.500 l-5 4.500 z M55.500 898 l5 4.500 l-5 4.500 z M60.500 898 h1.500 v9 h-1.500 z"/></g></svg>
<div class="a" style="left:67px;top:894px;width:58px;height:16px;background:#fbfbfb;border-top:1px solid #7a7a7a"></div>
<div class="t" style="left:80.0px;top:893.5px;letter-spacing:0.35px;font-weight:bold">Model</div>
<div class="a" style="left:125px;top:895px;width:68px;height:14px;background:#d2d2d2;border-left:1px solid #8a8a8a;border-right:1px solid #8a8a8a"></div>
<div class="t" style="left:135.0px;top:893.5px;letter-spacing:-0.17px;">3D Views</div>
<div class="a" style="left:193px;top:895px;width:108px;height:14px;background:#d2d2d2;border-right:1px solid #8a8a8a"></div>
<div class="t" style="left:202.0px;top:893.5px;letter-spacing:0.31px;">Motion Study 1</div>
<div class="t" style="left:2.5px;top:913.0px;letter-spacing:-0.65px;">SOLIDWORKS</div>
<div class="t" style="left:78.0px;top:913.0px;letter-spacing:0.03px;">Premium 2017 x64 Edition</div>
<div class="a" style="left:1037px;top:912px;width:1px;height:15px;background:#cfcfcf"></div>
<div class="a" style="left:1045px;top:912px;width:1px;height:15px;background:#cfcfcf"></div>
<div class="a" style="left:1116px;top:912px;width:1px;height:15px;background:#cfcfcf"></div>
<div class="a" style="left:1132px;top:912px;width:1px;height:15px;background:#cfcfcf"></div>
<div class="t" style="left:1049.0px;top:913.0px;letter-spacing:0.13px;">Editing Part</div>
<div class="t" style="left:1164.0px;top:913.0px;letter-spacing:0.30px;color:#a8a8a8">MMGS</div>
<svg width="8" height="6" viewBox="0 0 8 6" style="left:1217px;top:917px"><path d="M1 4.500 h6 l-3-3 z" fill="#8a8a8a"/></svg>
<svg width="18" height="14" viewBox="0 0 18 14" style="left:1290px;top:913px"><path d="M2 2 l5-1.500 l9 4 l-6 8 l-8.500-4 z M1.500 8.500 l.5-6.500 M7.500 6.500 l8.500-2" fill="#fff" stroke="#222" stroke-width="1.300" stroke-linejoin="round"/><circle cx="6" cy="4" r="1.600" fill="none" stroke="#222"/><path d="M9 7 l2-2" stroke="#222" stroke-width="1.300"/></svg>
<svg width="10" height="10" viewBox="0 0 10 10" style="left:1318px;top:917px"><g fill="#b8b8b8"><rect x="7" y="1" width="2" height="2"/><rect x="4" y="4" width="2" height="2"/><rect x="7" y="4" width="2" height="2"/><rect x="1" y="7" width="2" height="2"/><rect x="4" y="7" width="2" height="2"/><rect x="7" y="7" width="2" height="2"/></g></svg>

<div id="frame" class="a"></div>
</body>
</html>
